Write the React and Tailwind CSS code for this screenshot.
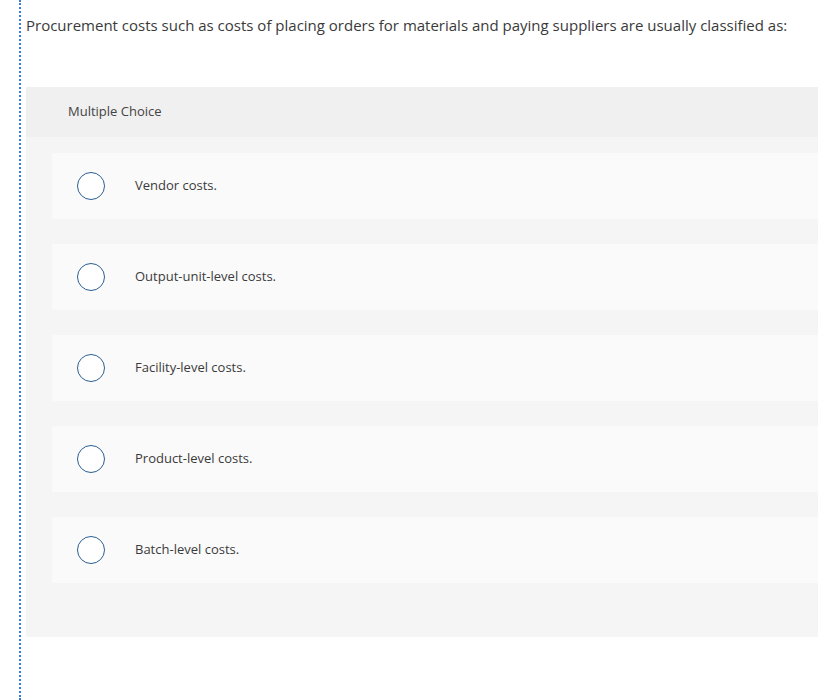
const OPTIONS = [
  'Vendor costs.',
  'Output-unit-level costs.',
  'Facility-level costs.',
  'Product-level costs.',
  'Batch-level costs.',
]

function Radio() {
  return <span className="block w-[28px] h-[28px] rounded-full border-[1.5px] border-[#2c5e93] bg-white shrink-0" />
}

export default function App() {
  return (
    <div className="min-h-[700px] bg-white font-['Open_Sans','Liberation_Sans',sans-serif] text-[#333]">
      <div className="ml-[19px] min-h-[700px] border-l-[2px] border-dotted border-[#3b7dd0] pl-[5px]">
        <p className="pt-[15px] text-[15px] leading-[20px] text-[#3a3a3a]">
          Procurement costs such as costs of placing orders for materials and paying suppliers are usually classified as:
        </p>

        <div className="mt-[52px] rounded-bl-[3px] bg-[#f5f5f5]">
          <div className="h-[50px] flex items-center pl-[42px] bg-[#f0f0f0] text-[13px] text-[#444]">
            Multiple Choice
          </div>
          <div className="flex flex-col gap-[25px] pt-[16px] pb-[54px] pl-[26px]">
            {OPTIONS.map(o => (
              <label key={o} className="h-[66px] flex items-center bg-[#fafafa] rounded-l-[2px] cursor-pointer">
                <span className="ml-[25px]"><Radio /></span>
                <span className="ml-[30px] text-[13px] text-[#3a3a3a]">{o}</span>
              </label>
            ))}
          </div>
        </div>
      </div>
    </div>
  )
}
